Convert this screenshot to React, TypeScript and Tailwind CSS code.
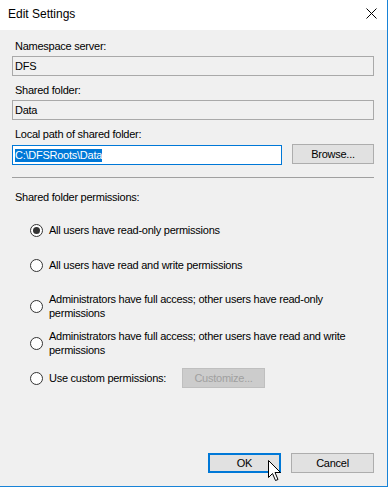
import React from "react";

const font = "font-['Liberation_Sans',Arial,sans-serif]";

const Radio = ({ checked }: { checked?: boolean }) => (
    <span className="w-[13px] h-[13px] shrink-0 rounded-full border border-[#333333] bg-white flex items-center justify-center">
        {checked && <span className="w-[7px] h-[7px] rounded-full bg-[#333333]"></span>}
    </span>
);

const ReadOnlyBox = ({ value }: { value: string }) => (
    <div className="w-[362px] h-[20px] border border-[#a9a9a9] bg-[#f0f0f0] flex items-center px-[2px] text-[11px] leading-[13px]">
        {value}
    </div>
);

const App = (): React.JSX.Element => {
    return (
        <div className={`w-[390px] h-[488px] bg-white relative ${font} text-black`}>
            <div className="w-[388px] h-[487px] border-r border-b border-[#1883d7] flex flex-col">
                {/* title bar */}
                <div className="h-[30px] bg-white flex items-center justify-between pl-[8px] pr-[10px] shrink-0">
                    <span className="text-[12px] leading-[14px] -mt-[2px]">Edit Settings</span>
                    <svg width="11" height="11" viewBox="0 0 11 11" className="-mt-[3px]">
                        <path d="M0.5 0.5 L10.5 10.5 M10.5 0.5 L0.5 10.5" stroke="#000" strokeWidth="1" />
                    </svg>
                </div>

                {/* body */}
                <div className="flex-1 bg-[#f0f0f0] px-[12px] pt-[10px] text-[11px] leading-[13px] tracking-[-0.25px]">
                    <div className="pl-[3px]">Namespace server:</div>
                    <div className="mt-[3px]"><ReadOnlyBox value="DFS" /></div>

                    <div className="pl-[3px] mt-[8px]">Shared folder:</div>
                    <div className="mt-[3px]"><ReadOnlyBox value="Data" /></div>

                    <div className="pl-[3px] mt-[8px]">Local path of shared folder:</div>
                    <div className="mt-[3px] flex items-start gap-[10px]">
                        <div className="mt-[1px] w-[270px] h-[20px] border border-[#0078d7] bg-white flex items-center px-[2px]">
                            <span className="bg-[#0078d7] text-white">C:\DFSRoots\Data</span>
                        </div>
                        <button className="w-[82px] h-[20px] border border-[#adadad] bg-[#e1e1e1] text-[11px] leading-[13px]">
                            Browse...
                        </button>
                    </div>

                    <div className="mt-[12px] w-[362px] h-px bg-[#a0a0a0]"></div>

                    <div className="pl-[3px] mt-[13px]">Shared folder permissions:</div>

                    <div className="pl-[18px] flex flex-col">
                        <label className="mt-[20px] flex items-center gap-[6px]">
                            <Radio checked />
                            <span>All users have read-only permissions</span>
                        </label>
                        <label className="mt-[22px] flex items-center gap-[6px]">
                            <Radio />
                            <span>All users have read and write permissions</span>
                        </label>
                        <label className="mt-[20px] flex items-center gap-[6px] leading-[14px]">
                            <Radio />
                            <span>Administrators have full access; other users have read-only<br />permissions</span>
                        </label>
                        <label className="mt-[9px] flex items-center gap-[6px] leading-[14px]">
                            <Radio />
                            <span>Administrators have full access; other users have read and write<br />permissions</span>
                        </label>
                        <div className="mt-[11px] flex items-center">
                            <Radio />
                            <span className="ml-[6px] w-[133px]">Use custom permissions:</span>
                            <button disabled className="w-[83px] h-[20px] border border-[#bfbfbf] bg-[#cccccc] text-[#a0a0a0] text-[11px] leading-[13px]">
                                Customize...
                            </button>
                        </div>
                    </div>

                    <div className="mt-[65px] flex justify-end gap-[10px] pr-[1px]">
                        <button className="w-[73px] h-[20px] border-2 border-[#0078d7] bg-[#e1e1e1] text-[11px] leading-[13px]">
                            OK
                        </button>
                        <button className="w-[83px] h-[20px] border border-[#adadad] bg-[#e1e1e1] text-[11px] leading-[13px]">
                            Cancel
                        </button>
                    </div>
                </div>
            </div>

            {/* mouse pointer */}
            <svg width="14" height="22" viewBox="0 0 14 22" className="absolute left-[268px] top-[460px]">
                <path d="M0.5 0.5 L0.5 17.5 L4.5 13.5 L7.5 20.5 L10 19.5 L7 12.5 L12.5 12.5 Z" fill="#fff" stroke="#000" strokeWidth="1" strokeLinejoin="miter" />
            </svg>
        </div>
    );
};

export default App;
